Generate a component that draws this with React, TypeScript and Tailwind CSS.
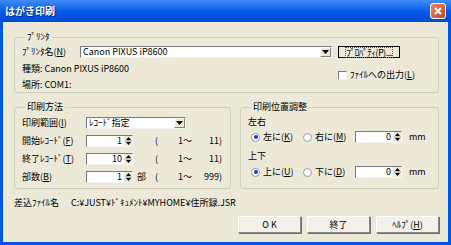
import React from 'react'

const font = "font-['Noto_Sans_CJK_JP','Liberation_Sans',sans-serif]"

// sunken white field, classic 3D edge
const field = 'border border-t-[#7a7a7a] border-l-[#7a7a7a] border-b-[#f4f4f4] border-r-[#f4f4f4] bg-white'

const SpinArrows = () => (
  <div className="flex w-[8px] flex-col items-center justify-center bg-[#ECE9D8]">
    <svg width="7" height="10" viewBox="0 0 7 10">
      <path d="M3.5 1 L6 4 H1 Z" fill="#000" />
      <line x1="0" y1="5" x2="7" y2="5" stroke="#9a9a9a" strokeWidth="1" />
      <path d="M1 6 H6 L3.5 9 Z" fill="#000" />
    </svg>
  </div>
)

const Spin = ({ value }: { value: string }) => (
  <div className={`flex h-[12px] w-[47px] ${field}`}>
    <span className="flex-1 pr-[2px] text-right leading-[10px]">{value}</span>
    <SpinArrows />
  </div>
)

const DropArrow = () => (
  <div className="flex w-[11px] items-center justify-center border border-t-white border-l-white border-b-[#808080] border-r-[#808080] bg-[#ECE9D8]">
    <svg width="7" height="4" viewBox="0 0 7 4">
      <path d="M0 0 H7 L3.5 4 Z" fill="#000" />
    </svg>
  </div>
)

const Select = ({ value, w }: { value: string; w: string }) => (
  <div className={`flex h-[12px] ${w} ${field}`}>
    <span className="flex-1 pl-[2px] leading-[10px]">{value}</span>
    <DropArrow />
  </div>
)

const Radio = ({ checked, label }: { checked?: boolean; label: React.ReactNode }) => (
  <div className="flex items-center gap-[3px]">
    <span className="flex h-[9px] w-[9px] items-center justify-center rounded-full border border-[#9a9a9a] bg-white">
      {checked && <span className="h-[4px] w-[4px] rounded-full bg-[#1533ff]" />}
    </span>
    <span>{label}</span>
  </div>
)

const Button = ({ children }: { children: React.ReactNode }) => (
  <button className="h-[17px] w-[63px] border border-t-white border-l-white border-b-[#8c8c8c] border-r-[#8c8c8c] bg-[#F2F0E8] shadow-[1px_1px_0_#6f6f6f] leading-[14px]">
    {children}
  </button>
)

const Row = ({ label, children }: { label: React.ReactNode; children: React.ReactNode }) => (
  <div className="flex h-[12px] items-center">
    <span className="w-[64px]">{label}</span>
    {children}
  </div>
)

const Range = ({ unit, max }: { unit?: string; max: string }) => (
  <>
    <span className="ml-[4px] w-[18px]">{unit}</span>
    <span className="w-[10px]">(</span>
    <span className="w-[27px] text-right">1～</span>
    <span className="w-[30px] text-right">{max})</span>
  </>
)

export default function App() {
  return (
    <div className={`flex h-[245px] w-[451px] flex-col bg-[#0055E5] text-[9px] leading-[12px] text-black ${font}`}>
      <div className="flex h-[22px] items-center justify-between bg-linear-to-b from-[#3D8CF6] via-[#0A5CEB] to-[#0049D6] pl-[5px] pr-[5px]">
        <span className="text-[10px] font-bold text-white [text-shadow:1px_1px_0_#0a2a80]">はがき印刷</span>
        <div className="flex h-[16px] w-[16px] items-center justify-center rounded-[3px] border border-white bg-linear-to-br from-[#E9856A] to-[#C7401E]">
          <svg width="8" height="8" viewBox="0 0 8 8">
            <path d="M1 1 L7 7 M7 1 L1 7" stroke="#fff" strokeWidth="1.8" />
          </svg>
        </div>
      </div>

      <div className="mx-[3px] mb-[3px] flex flex-1 flex-col bg-[#ECE9D8] pl-[11px] pr-[9px] pt-[9px]">
        <fieldset className="rounded-[3px] border border-[#D0D0BF] pb-[1px] pl-[7px] pt-[3px]">
          <legend className="ml-[3px] px-[2px]">ﾌﾟﾘﾝﾀ</legend>
          <div className="flex h-[12px] items-center">
            <span className="w-[58px]">ﾌﾟﾘﾝﾀ名(<u>N</u>)</span>
            <Select value="Canon PIXUS iP8600" w="w-[252px]" />
            <div className="ml-[6px] flex h-[12px] w-[62px] items-center justify-center border border-black bg-[#ECE9D8]">
              <span className="whitespace-nowrap tracking-[-0.5px] outline outline-1 outline-dotted outline-[#555] leading-[9px]">ﾌﾟﾛﾊﾟﾃｨ(<u>P</u>)...</span>
            </div>
          </div>
          <div className="mt-[5px] flex">
            <div className="flex w-[316px] flex-col gap-[4px]">
              <span>種類: Canon PIXUS iP8600</span>
              <span>場所: COM1:</span>
            </div>
            <div className="mt-[6px] flex h-[12px] items-center gap-[3px]">
              <span className={`h-[9px] w-[9px] ${field}`} />
              <span>ﾌｧｲﾙへの出力(<u>L</u>)</span>
            </div>
          </div>
        </fieldset>

        <div className="mt-[8px] flex gap-[9px]">
          <fieldset className="flex w-[217px] flex-col gap-[6px] rounded-[3px] border border-[#D0D0BF] pb-[5px] pl-[7px] pt-[4px]">
            <legend className="ml-[3px] px-[2px]">印刷方法</legend>
            <Row label={<>印刷範囲(<u>I</u>)</>}>
              <Select value="ﾚｺｰﾄﾞ指定" w="w-[100px]" />
            </Row>
            <Row label={<>開始ﾚｺｰﾄﾞ(<u>F</u>)</>}>
              <Spin value="1" />
              <Range max="11" />
            </Row>
            <Row label={<>終了ﾚｺｰﾄﾞ(<u>T</u>)</>}>
              <Spin value="10" />
              <Range max="11" />
            </Row>
            <Row label={<>部数(<u>B</u>)</>}>
              <Spin value="1" />
              <Range unit="部" max="999" />
            </Row>
          </fieldset>

          <fieldset className="flex flex-1 flex-col rounded-[3px] border border-[#D0D0BF] pb-[7px] pl-[7px] pt-[3px]">
            <legend className="ml-[3px] px-[2px]">印刷位置調整</legend>
            <span>左右</span>
            <div className="mt-[3px] flex h-[12px] items-center">
              <div className="w-[55px] pl-[3px]"><Radio checked label={<>左に(<u>K</u>)</>} /></div>
              <div className="w-[52px]"><Radio label={<>右に(<u>M</u>)</>} /></div>
              <Spin value="0" />
              <span className="ml-[7px]">mm</span>
            </div>
            <span className="mt-[7px]">上下</span>
            <div className="mt-[4px] flex h-[12px] items-center">
              <div className="w-[55px] pl-[3px]"><Radio checked label={<>上に(<u>U</u>)</>} /></div>
              <div className="w-[52px]"><Radio label={<>下に(<u>D</u>)</>} /></div>
              <Spin value="0" />
              <span className="ml-[7px]">mm</span>
            </div>
          </fieldset>
        </div>

        <div className="mt-[8px] flex">
          <span className="w-[57px]">差込ﾌｧｲﾙ名</span>
          <span>C:¥JUST¥ﾄﾞｷｭﾒﾝﾄ¥MYHOME¥住所録.JSR</span>
        </div>

        <div className="mt-[7px] flex justify-end gap-[6px]">
          <Button>O K</Button>
          <Button>終了</Button>
          <Button>ﾍﾙﾌﾟ(<u>H</u>)</Button>
        </div>
      </div>
    </div>
  )
}
